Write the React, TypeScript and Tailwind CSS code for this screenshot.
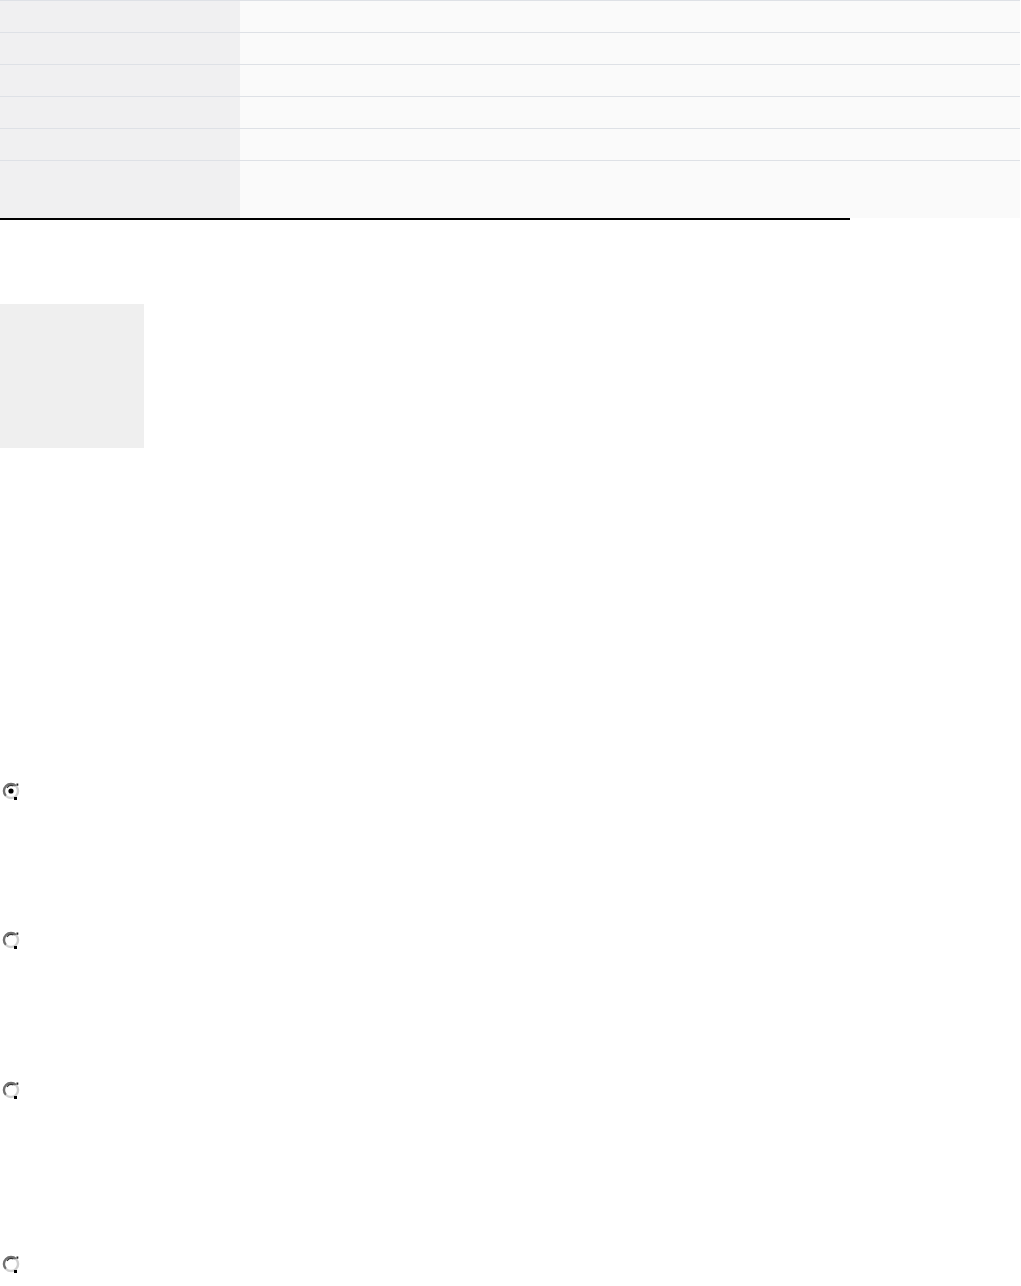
const rows = [32, 32, 32, 32, 32, 58];

function InfoTable() {
  return (
    <div className="w-[1020px]">
      {rows.map((h, i) => (
        <div key={i} className="flex border-t border-[#dee1e6]" style={{ height: h }}>
          <div className="w-[240px] shrink-0 bg-[#f0f0f1]" />
          <div className="flex-1 bg-[#fafafa]" />
        </div>
      ))}
    </div>
  );
}

// old-style grey radio, drawn so it matches the screenshot
function RadioMark({ checked }: { checked?: boolean }) {
  return (
    <svg width="18" height="18" viewBox="0 0 18 18">
      <circle cx="9" cy="9" r="7" fill="#ffffff" />
      <path d="M4 14 A7 7 0 0 1 14 4" fill="none" stroke="#707070" strokeWidth="2.4" />
      <path d="M14 4 A7 7 0 0 1 4 14" fill="none" stroke="#d0d0d0" strokeWidth="2.4" />
      <path d="M5 5.8 A5.2 5.2 0 0 1 11.5 4" fill="none" stroke="#333333" strokeWidth="1.2" />
      <rect x="12" y="15" width="3" height="3" fill="#000000" />
      <rect x="14.5" y="1.5" width="1.8" height="2.2" fill="#222222" />
      {checked && <circle cx="9" cy="9" r="2.6" fill="#000000" />}
    </svg>
  );
}

function Choice({ checked, gap }: { checked?: boolean; gap: string }) {
  return (
    <div className={gap}>
      <div role="radio" aria-checked={checked ? "true" : "false"} className="ml-[2px] block h-[18px] w-[18px]">
        <RadioMark checked={checked} />
      </div>
    </div>
  );
}

export default function App() {
  return (
    <div className="min-h-[1286px] bg-white font-['Liberation_Sans',sans-serif]">
      <InfoTable />
      <div className="h-[2px] w-[850px] bg-black" />
      <div className="mt-[84px] h-[144px] w-[144px] bg-[#efefef]" />
      <Choice checked gap="pt-[334px]" />
      <Choice gap="pt-[131px]" />
      <Choice gap="pt-[132px]" />
      <Choice gap="pt-[156px]" />
    </div>
  );
}
